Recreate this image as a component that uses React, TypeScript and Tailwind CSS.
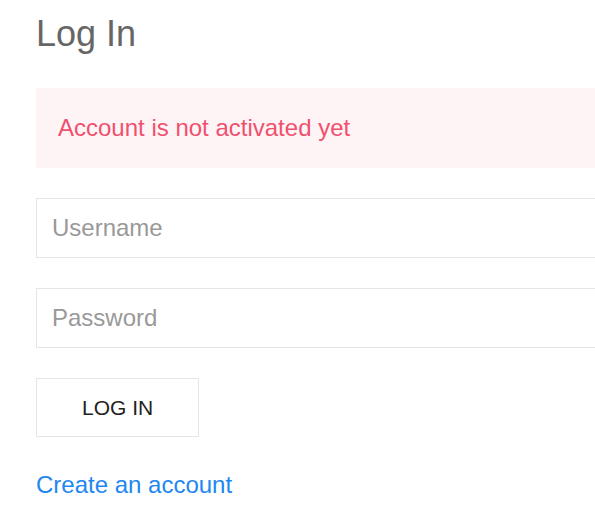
export default function App() {
  return (
    <div
      className="min-h-[530px] overflow-hidden bg-white pl-[36px] pt-[11px] text-[24px] leading-[1.5] text-[#666]"
      style={{ fontFamily: '"Liberation Sans", Arial, sans-serif' }}
    >
      <div className="w-[600px]">
        <h1 className="m-0 text-[36px] font-normal leading-[1.3] text-[#666]">Log In</h1>

        {/* Alert */}
        <div className="mt-[30px] bg-[#fef4f6] py-[22px] pl-[22px] pr-[22px] text-[#f0506e]">
          Account is not activated yet
        </div>

        <form className="mt-[30px] flex flex-col" onSubmit={(e) => e.preventDefault()}>
          <input
            type="text"
            placeholder="Username"
            className="h-[60px] w-full border border-[#e5e5e5] bg-white px-[15px] text-[24px] text-[#666] outline-none placeholder:text-[#999]"
          />
          <input
            type="password"
            placeholder="Password"
            className="mt-[30px] h-[60px] w-full border border-[#e5e5e5] bg-white px-[15px] text-[24px] text-[#666] outline-none placeholder:text-[#999]"
          />
          <div className="mt-[30px]">
            <button
              type="submit"
              className="h-[59px] border border-[#e5e5e5] bg-transparent px-[45px] text-[21px] uppercase text-[#222]"
            >
              Log In
            </button>
          </div>
        </form>

        <div className="mt-[30px]">
          <a href="#" className="text-[#1e87f0] no-underline">
            Create an account
          </a>
        </div>
      </div>
    </div>
  );
}
